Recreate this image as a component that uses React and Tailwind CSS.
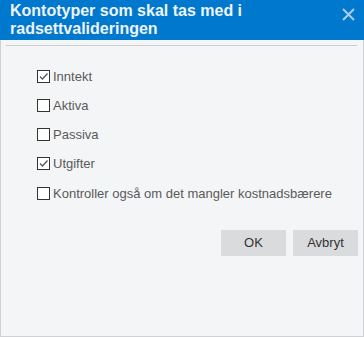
import React, { useState } from "react";

const Check = ({ checked, onChange, label }) => (
  <label className="flex items-center h-[13px] cursor-pointer">
    <span
      onClick={onChange}
      className="w-[13px] h-[13px] border border-[#333333] bg-white flex items-center justify-center shrink-0"
    >
      {checked && (
        <svg width="11" height="11" viewBox="0 0 11 11">
          <path d="M2 5.5 L4.5 8 L9.5 2.5" fill="none" stroke="#555555" strokeWidth="1.3" />
        </svg>
      )}
    </span>
    <span className="ml-[3px] text-[13px] leading-[15px] text-[#5a5a5a]">{label}</span>
  </label>
);

const App = () => {
  const [values, setValues] = useState({
    inntekt: true,
    aktiva: false,
    passiva: false,
    utgifter: true,
    kostnad: false,
  });

  const toggle = (key) => setValues({ ...values, [key]: !values[key] });

  return (
    <div
      className="w-[364px] h-[337px] flex flex-col"
      style={{ fontFamily: '"Liberation Sans", Arial, sans-serif' }}
    >
      {/* Header */}
      <div className="h-[40px] bg-[#0078cd] flex justify-between pl-[10px] pr-[9px] pt-[2px] shrink-0">
        <h2 className="text-[16px] leading-[18px] font-bold text-[#eef4fa]">
          Kontotyper som skal tas med i
          <br />
          radsettvalideringen
        </h2>
        <svg width="13" height="13" viewBox="0 0 13 13" className="mt-[6px] shrink-0">
          <path d="M1 1 L12 12 M12 1 L1 12" stroke="#a9cdee" strokeWidth="2" />
        </svg>
      </div>

      {/* Body */}
      <div className="flex-1 bg-[#f4f5f7] border-x border-b border-[#cfd1d4] px-[5px] pt-[5px]">
        <div className="h-px bg-[#cccccc] mr-[1px]"></div>

        <div className="pl-[31px] pt-[24px] flex flex-col gap-[16px]">
          <Check checked={values.inntekt} onChange={() => toggle("inntekt")} label="Inntekt" />
          <Check checked={values.aktiva} onChange={() => toggle("aktiva")} label="Aktiva" />
          <Check checked={values.passiva} onChange={() => toggle("passiva")} label="Passiva" />
          <Check checked={values.utgifter} onChange={() => toggle("utgifter")} label="Utgifter" />
          <div className="pt-[1px]">
            <Check
              checked={values.kostnad}
              onChange={() => toggle("kostnad")}
              label="Kontroller også om det mangler kostnadsbærere"
            />
          </div>
        </div>

        {/* Buttons */}
        <div className="flex justify-end gap-[7px] mt-[30px]">
          <button className="w-[65px] h-[26px] bg-[#dadbdd] text-[13px] text-[#333333]">OK</button>
          <button className="w-[65px] h-[26px] bg-[#dadbdd] text-[13px] text-[#333333]">Avbryt</button>
        </div>
      </div>
    </div>
  );
};

export default App;
